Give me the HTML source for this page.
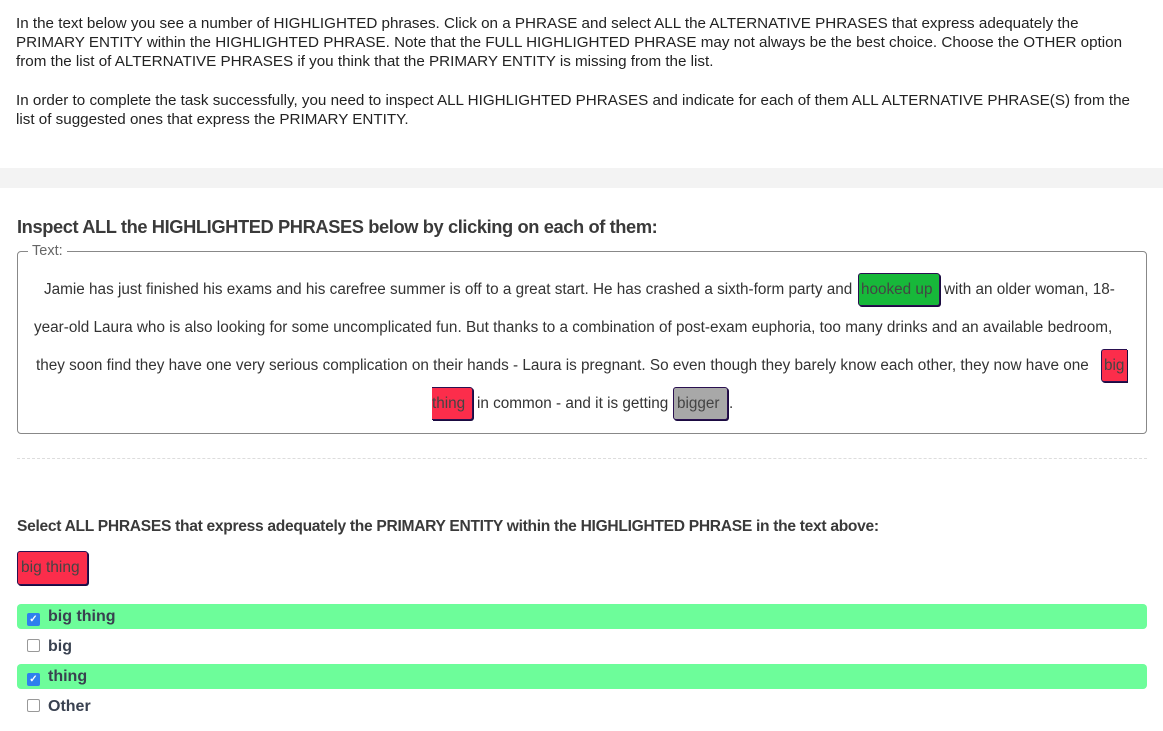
<!DOCTYPE html>
<html><head><style>
body{margin:0;width:1163px;height:731px;background:#fff;font-family:"Liberation Sans",sans-serif;color:#333;position:relative;overflow:hidden}
.a{position:absolute;white-space:nowrap}
.intro{left:16px;font-size:15.2px;color:#222}
.band{position:absolute;left:0;top:168px;width:1163px;height:20px;background:#f3f3f3}
h2{position:absolute;left:17px;top:216px;margin:0;font-size:18.3px;font-weight:bold;color:#3a3a3a;letter-spacing:-0.4px}
.fs{position:absolute;left:17px;top:251px;width:1128px;height:181px;border:1px solid #888;border-radius:4px}
.lg{position:absolute;left:28px;top:243px;background:#fff;padding:0 4px;font-size:14.5px;color:#666}
.t{font-size:15.3px;color:#333}
.hl{position:absolute;height:33px;border:1px solid #2a1050;border-radius:3px;box-sizing:border-box;font-size:15.3px;color:#444;line-height:31px;padding:0 3px;overflow:hidden;box-shadow:1px 1px 0 #1a0a40;white-space:nowrap}
.dash{position:absolute;left:17px;top:458px;width:1130px;border-top:1px dashed #ddd}
.opt{position:absolute;left:17px;width:1130px;height:25px;border-radius:4px;font-size:16px;font-weight:bold;color:#394150;line-height:25px}
.cb{display:inline-block;width:11px;height:11px;border:1px solid #999;border-radius:2px;margin:0 8px 0 10px;vertical-align:-1px;background:#fff}
.cb.on{background:#2f80ed;border-color:#2f80ed;color:#fff;font-size:10px;line-height:11px;text-align:center}
</style></head><body>
<div class="a intro" style="top:15px">In the text below you see a number of HIGHLIGHTED phrases. Click on a PHRASE and select ALL the ALTERNATIVE PHRASES that express adequately the</div>
<div class="a intro" style="top:34px">PRIMARY ENTITY within the HIGHLIGHTED PHRASE. Note that the FULL HIGHLIGHTED PHRASE may not always be the best choice. Choose the OTHER option</div>
<div class="a intro" style="top:53px">from the list of ALTERNATIVE PHRASES if you think that the PRIMARY ENTITY is missing from the list.</div>
<div class="a intro" style="top:92px">In order to complete the task successfully, you need to inspect ALL HIGHLIGHTED PHRASES and indicate for each of them ALL ALTERNATIVE PHRASE(S) from the</div>
<div class="a intro" style="top:111px">list of suggested ones that express the PRIMARY ENTITY.</div>
<div class="band"></div>
<h2>Inspect ALL the HIGHLIGHTED PHRASES below by clicking on each of them:</h2>
<div class="fs"></div>
<div class="lg">Text:</div>
<div class="a t" style="left:44px;top:281px">Jamie has just finished his exams and his carefree summer is off to a great start. He has crashed a sixth-form party and</div>
<div class="hl" style="left:858px;top:273px;width:82px;background:#17b83a;padding:0 2px">hooked up</div>
<div class="a t" style="left:944px;top:281px">with an older woman, 18-</div>
<div class="a t" style="left:34px;top:319px">year-old Laura who is also looking for some uncomplicated fun. But thanks to a combination of post-exam euphoria, too many drinks and an available bedroom,</div>
<div class="a t" style="left:36px;top:357px">they soon find they have one very serious complication on their hands - Laura is pregnant. So even though they barely know each other, they now have one</div>
<div class="hl" style="left:1101px;top:349px;width:26px;background:#fc2d4b;border-right:none;border-radius:3px 0 0 3px;padding:0 2px">big</div>
<div class="hl" style="left:432px;top:387px;width:41px;background:#fc2d4b;border-left:none;border-radius:0 3px 3px 0;padding-left:0">thing</div>
<div class="a t" style="left:477px;top:395px">in common - and it is getting</div>
<div class="hl" style="left:673px;top:387px;width:55px;background:#a8a8a8">bigger</div>
<div class="a t" style="left:729px;top:395px">.</div>
<div class="dash"></div>
<div class="a" style="left:17px;top:518px;font-size:15.6px;font-weight:bold;color:#3a3a3a;letter-spacing:-0.3px">Select ALL PHRASES that express adequately the PRIMARY ENTITY within the HIGHLIGHTED PHRASE in the text above:</div>
<div class="hl" style="left:17px;top:551px;width:71px;height:34px;background:#fc2d4b;font-size:15.5px;line-height:32px;padding:0 3px">big thing</div>
<div class="opt" style="top:604px;background:#6dfd9a"><span class="cb on">✓</span>big thing</div>
<div class="opt" style="top:634px"><span class="cb"></span>big</div>
<div class="opt" style="top:664px;background:#6dfd9a"><span class="cb on">✓</span>thing</div>
<div class="opt" style="top:694px"><span class="cb"></span>Other</div>
</body></html>
